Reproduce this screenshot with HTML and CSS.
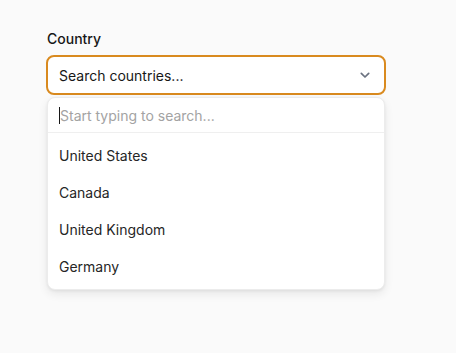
FILE: index.html
```html
<!DOCTYPE html>
<html>
<head>
<meta charset="utf-8">
<link rel="stylesheet" href="styles.css">
</head>
<body>
<div class="field">
  <label class="label">Country</label>
  <div class="trigger">
    <span class="trigger-text">Search countries...</span>
    <svg class="chev" width="12" height="12" viewBox="0 0 12 12"><path d="M2.3 4.3 L6 8 L9.7 4.3" fill="none" stroke="#6b7280" stroke-width="1.7" stroke-linecap="round" stroke-linejoin="round"/></svg>
  </div>
  <div class="menu">
    <div class="search"><span class="caret"></span><span class="ph">Start typing to search...</span></div>
    <ul class="list">
      <li>United States</li>
      <li>Canada</li>
      <li>United Kingdom</li>
      <li>Germany</li>
    </ul>
  </div>
</div>
</body>
</html>
```
FILE: styles.css
```css
html, body { margin: 0; padding: 0; }
body {
  background: #fafafa;
  font-family: Inter, "Noto Sans", sans-serif;
  color: #171717;
  width: 456px;
  height: 353px;
}
.field {
  width: 340px;
  padding: 30px 0 0 46px;
  display: flex;
  flex-direction: column;
}
.label {
  font-size: 14px;
  font-weight: 500;
  line-height: 18px;
  margin-left: 1px;
  margin-bottom: 7px;
  color: #171717;
}
.trigger {
  height: 36px;
  border: 2px solid #d98a1f;
  border-radius: 8px;
  background: #fff;
  display: flex;
  align-items: center;
  justify-content: space-between;
  padding: 0 13px 0 11px;
  font-size: 14px;
}
.trigger-text { color: #171717; }
.chev { display: block; }
.menu {
  margin: 2px 1px 0 1px;
  background: #fff;
  border: 1px solid #ececec;
  border-radius: 8px;
  box-shadow: 0 4px 10px rgba(0,0,0,0.08), 0 1px 3px rgba(0,0,0,0.06);
  overflow: hidden;
}
.search {
  height: 34px;
  border-bottom: 1px solid #efefef;
  display: flex;
  align-items: center;
  padding-left: 11px;
  font-size: 14px;
}
.caret {
  width: 1px;
  height: 17px;
  background: #171717;
}
.ph { color: #a3a3a3; }
.list {
  list-style: none;
  margin: 0;
  padding: 4px 0;
}
.list li {
  height: 37px;
  line-height: 37px;
  padding-left: 11px;
  font-size: 14px;
  color: #262626;
}
```
